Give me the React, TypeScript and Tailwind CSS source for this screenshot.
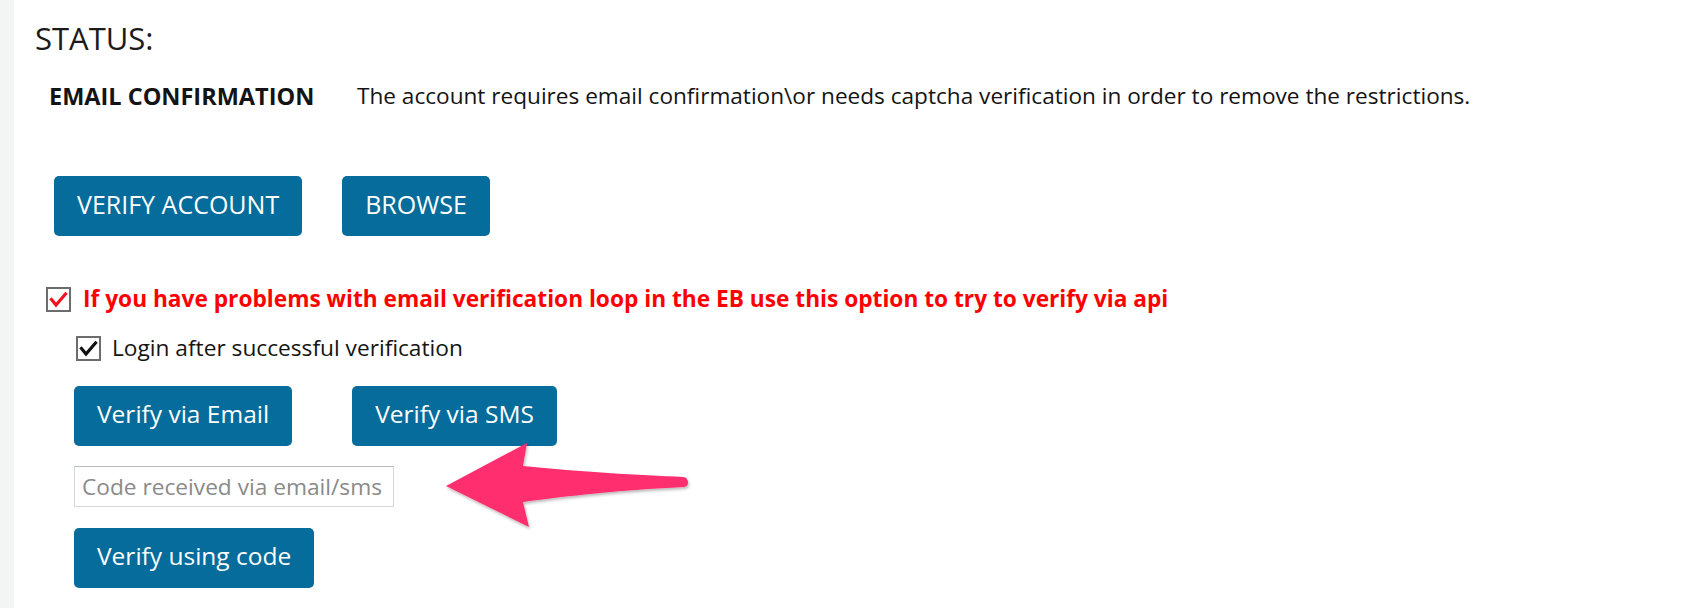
import React from "react";

const btn =
	"h-[60px] px-[23px] pb-[4px] rounded-[5px] bg-[#056c9b] text-white leading-none whitespace-nowrap";

function Check({ color }: { color: string }) {
	return (
		<span className="flex h-[25px] w-[25px] shrink-0 items-center justify-center border-2 border-[#6c6c6c] bg-white">
			<svg width="21" height="21" viewBox="0 0 21 21" fill="none">
				<path
					d="M3.5 10.5 L8 16 L17.5 5"
					stroke={color}
					strokeWidth="3.2"
					strokeLinecap="square"
				/>
			</svg>
		</span>
	);
}

export default function App() {
	return (
		<div className="relative flex min-h-[608px] w-full bg-white font-['Open_Sans',sans-serif] text-[#141414]">
			{/* left gutter */}
			<div className="w-[14px] shrink-0 bg-[#f3f4f4]" />

			<div className="flex flex-1 flex-col pl-[21px] pt-[18px] pb-[20px]">
				<h2 className="text-[31px] leading-[40px] font-normal text-[#1b1b1b]">
					STATUS:
				</h2>

				{/* email confirmation row */}
				<div className="mt-[23px] flex items-center leading-[30px]">
					<div className="w-[322px] shrink-0 pl-[14px] text-[23.5px] font-bold">
						EMAIL CONFIRMATION
					</div>
					<p className="text-[22.6px]">
						The account requires email confirmation\or needs captcha verification
						in order to remove the restrictions.
					</p>
				</div>

				{/* main buttons */}
				<div className="mt-[65px] flex gap-[40px] pl-[19px]">
					<button type="button" className={`${btn} text-[25px]`}>
						VERIFY ACCOUNT
					</button>
					<button type="button" className={`${btn} text-[25px]`}>
						BROWSE
					</button>
				</div>

				{/* api option */}
				<label className="mt-[51px] flex h-[25px] items-center gap-[12px] pl-[11px]">
					<Check color="#f5121f" />
					<span className="text-[22.7px] font-bold text-[#ff0000]">
						If you have problems with email verification loop in the EB use this
						option to try to verify via api
					</span>
				</label>

				<label className="mt-[24px] flex h-[25px] items-center gap-[11px] pl-[41px]">
					<Check color="#111111" />
					<span className="text-[22.7px]">Login after successful verification</span>
				</label>

				<div className="flex flex-col items-start pl-[39px]">
					<div className="mt-[25px] flex gap-[60px]">
						<button type="button" className={`${btn} text-[24.5px]`}>
							Verify via Email
						</button>
						<button type="button" className={`${btn} text-[24.5px]`}>
							Verify via SMS
						</button>
					</div>

					<input
						type="text"
						placeholder="Code received via email/sms"
						className="mt-[20px] h-[41px] w-[320px] border border-[#d5d8db] border-t-[#b8bcc0] px-[7px] text-[22.7px] outline-none placeholder:text-[#8a8a8a]"
					/>

					<button type="button" className={`${btn} mt-[21px] text-[24.5px]`}>
						Verify using code
					</button>
				</div>
			</div>

			{/* annotation arrow */}
			<svg
				className="pointer-events-none absolute left-[440px] top-[438px]"
				width="256"
				height="100"
				viewBox="0 0 256 100"
			>
				<defs>
					<filter id="sh" x="-10%" y="-20%" width="120%" height="150%">
						<feDropShadow dx="1" dy="2" stdDeviation="1.5" floodColor="#000" floodOpacity="0.28" />
					</filter>
				</defs>
				<path
					d="M6 48 L87 5 L83 28 C140 34 200 37 243 39 C249 39 250 49 244 49 C200 51 140 56 83 64 L89 89 Z"
					fill="#ff2d6e"
					filter="url(#sh)"
				/>
			</svg>
		</div>
	);
}
